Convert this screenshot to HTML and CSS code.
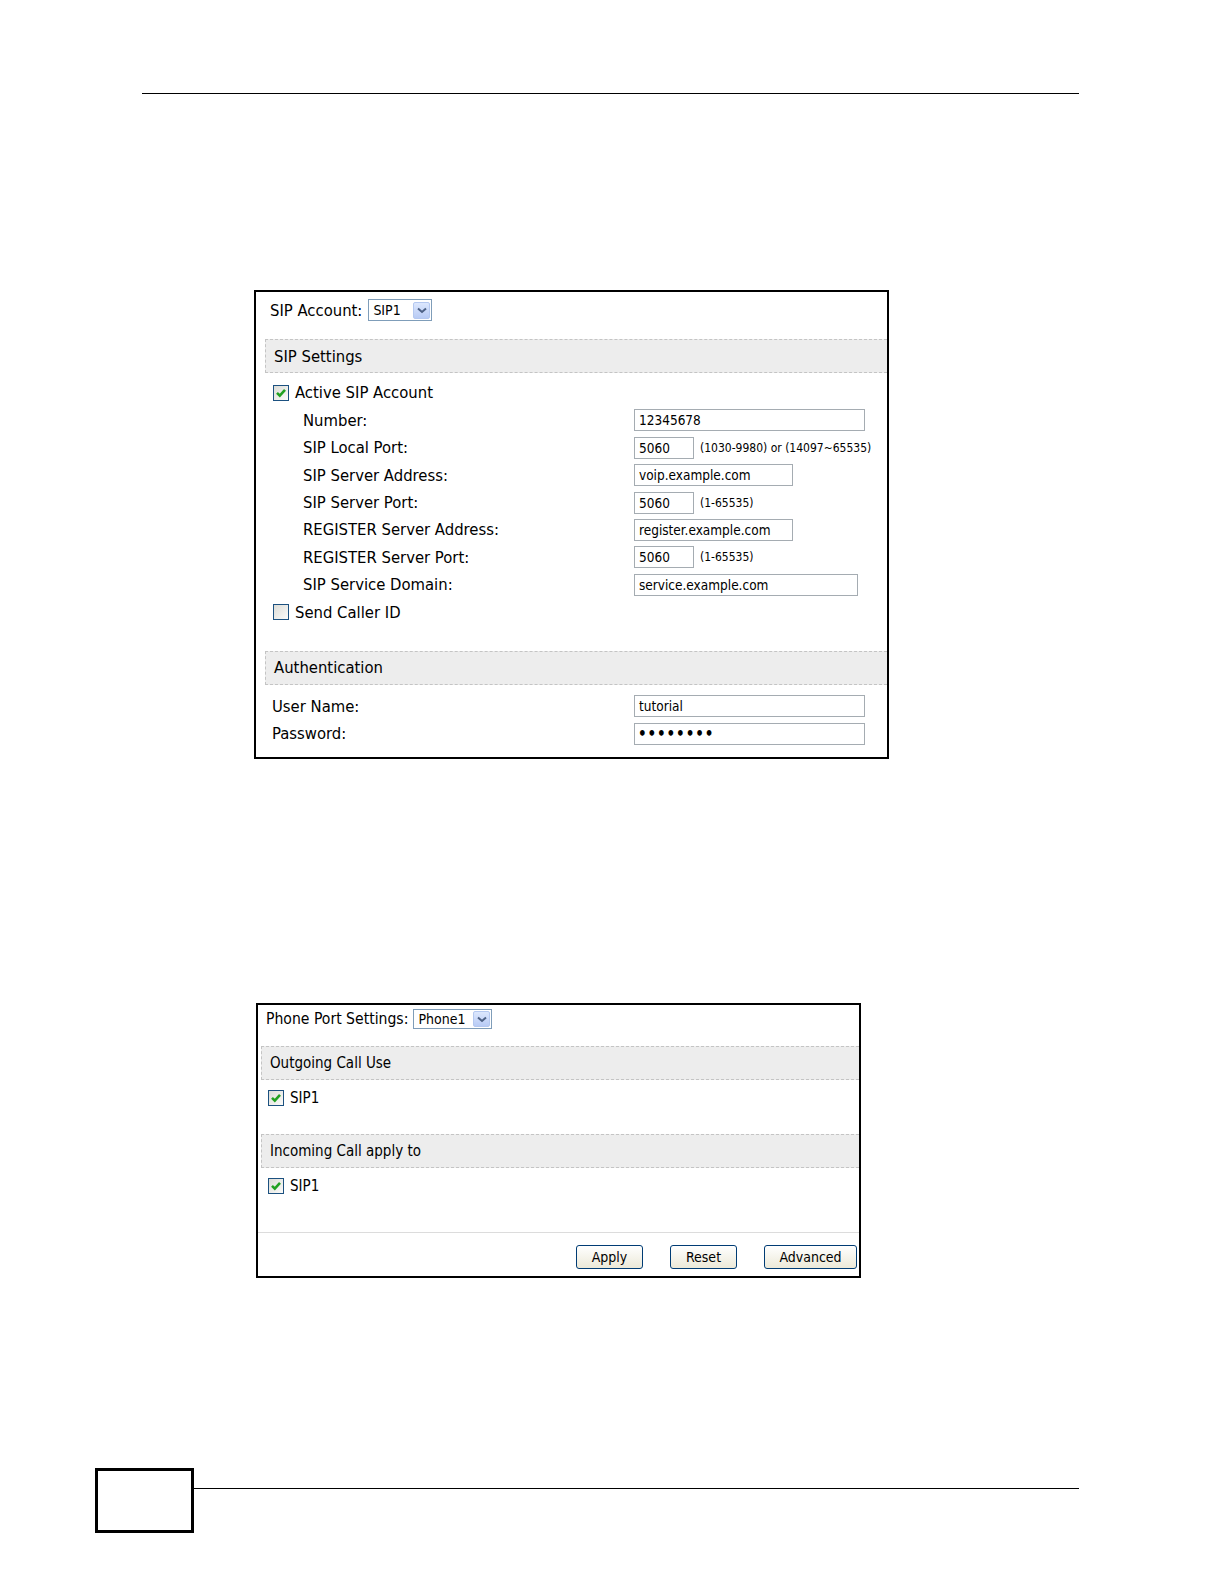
FILE: index.html
```html
<!DOCTYPE html>
<html lang="en">
<head>
<meta charset="UTF-8">
<meta name="viewport" content="width=device-width, initial-scale=1.0">
<title>SIP Account Settings</title>
<link rel="stylesheet" href="styles.css">
</head>

<body>
<div class="top-rule"></div>

<div class="frame sip-frame">
    <div class="pick-row">
        <span>SIP Account:</span>
        <span class="select select-sip">
            <span class="select-text">SIP1</span>
            <span class="select-btn"><svg width="10" height="7" viewBox="0 0 10 7"><path d="M1 1.5 L5 5 L9 1.5" fill="none" stroke="#4d6185" stroke-width="2"/></svg></span>
        </span>
    </div>

    <div class="section-head">SIP Settings</div>
    <div class="rows">
        <div class="row check-row">
            <span class="check-label"><span class="box checked"><svg width="12" height="12" viewBox="0 0 12 12"><path d="M2 5.8 L4.8 8.6 L10 2.8" fill="none" stroke="#21a121" stroke-width="2.6"/></svg></span>Active SIP Account</span>
        </div>
        <div class="row">
            <span class="label indent">Number:</span>
            <span class="field w-long">12345678</span>
        </div>
        <div class="row">
            <span class="label indent">SIP Local Port:</span>
            <span class="field w-port">5060</span><span class="hint">(1030-9980) or (14097~65535)</span>
        </div>
        <div class="row">
            <span class="label indent">SIP Server Address:</span>
            <span class="field w-mid">voip.example.com</span>
        </div>
        <div class="row">
            <span class="label indent">SIP Server Port:</span>
            <span class="field w-port">5060</span><span class="hint">(1-65535)</span>
        </div>
        <div class="row">
            <span class="label indent">REGISTER Server Address:</span>
            <span class="field w-mid">register.example.com</span>
        </div>
        <div class="row">
            <span class="label indent">REGISTER Server Port:</span>
            <span class="field w-port">5060</span><span class="hint">(1-65535)</span>
        </div>
        <div class="row">
            <span class="label indent">SIP Service Domain:</span>
            <span class="field w-wide">service.example.com</span>
        </div>
        <div class="row check-row">
            <span class="check-label"><span class="box"></span>Send Caller ID</span>
        </div>
    </div>

    <div class="section-head auth-head">Authentication</div>
    <div class="rows auth-rows">
        <div class="row">
            <span class="label">User Name:</span>
            <span class="field w-long">tutorial</span>
        </div>
        <div class="row">
            <span class="label">Password:</span>
            <span class="field w-long dots">&bull;&bull;&bull;&bull;&bull;&bull;&bull;&bull;</span>
        </div>
    </div>
</div>

<div class="frame port-frame">
    <div class="pick-row">
        <span>Phone Port Settings:</span>
        <span class="select select-phone">
            <span class="select-text">Phone1</span>
            <span class="select-btn"><svg width="10" height="7" viewBox="0 0 10 7"><path d="M1 1.5 L5 5 L9 1.5" fill="none" stroke="#4d6185" stroke-width="2"/></svg></span>
        </span>
    </div>

    <div class="section-head">Outgoing Call Use</div>
    <div class="line-row">
        <span class="check-label"><span class="box checked"><svg width="12" height="12" viewBox="0 0 12 12"><path d="M2 5.8 L4.8 8.6 L10 2.8" fill="none" stroke="#21a121" stroke-width="2.6"/></svg></span>SIP1</span>
    </div>

    <div class="section-head incoming-head">Incoming Call apply to</div>
    <div class="line-row">
        <span class="check-label"><span class="box checked"><svg width="12" height="12" viewBox="0 0 12 12"><path d="M2 5.8 L4.8 8.6 L10 2.8" fill="none" stroke="#21a121" stroke-width="2.6"/></svg></span>SIP1</span>
    </div>

    <div class="button-bar">
        <button class="btn btn-small">Apply</button>
        <button class="btn btn-small">Reset</button>
        <button class="btn btn-wide">Advanced</button>
    </div>
</div>

<div class="footer">
    <div class="page-box"></div>
    <div class="footer-rule"></div>
</div>
</body>
</html>
```

FILE: styles.css
```css
body {
    margin: 0;
    padding: 0;
    font-family: "DejaVu Sans Condensed", "DejaVu Sans", sans-serif;
    color: #000;
    background: #fff;
}
.top-rule {
    margin: 93px 146px 0 142px;
    border-top: 1px solid #000;
}
.frame {
    border: 2px solid #000;
    background: #fff;
}
.sip-frame {
    width: 631px;
    margin: 196px 0 0 254px;
    padding-bottom: 10px;
    font-size: 16.5px;
}
.port-frame {
    width: 601px;
    margin: 244px 0 0 256px;
    font-size: 15px;
}
.pick-row {
    display: flex;
    align-items: center;
    gap: 6px;
    height: 22px;
    padding: 7px 0 0 14px;
}
.port-frame .pick-row {
    height: 20px;
    gap: 5px;
    padding: 4px 0 0 8px;
    font-size: 15.6px;
}
.select {
    display: flex;
    align-items: center;
    justify-content: space-between;
    box-sizing: border-box;
    height: 22px;
    border: 1px solid #7f9db9;
    padding: 0 1px 0 4px;
    background: #fff;
}
.select-sip {
    width: 64px;
}
.select-phone {
    width: 79px;
    height: 20px;
}
.select-text {
    font-size: 14px;
}
.select-btn {
    display: flex;
    align-items: center;
    justify-content: center;
    width: 17px;
    height: 17px;
    box-sizing: border-box;
    border: 1px solid #b4c8f0;
    border-radius: 2px;
    background: linear-gradient(#dce7fd, #b8cbf5);
}
.select-phone .select-btn {
    height: 16px;
}
.section-head {
    box-sizing: border-box;
    height: 34px;
    margin: 18px 0 0 9px;
    padding-left: 8px;
    display: flex;
    align-items: center;
    background: #ededed;
    border: 1px dashed #c4c4c4;
    border-right: none;
}
.auth-head {
    margin-top: 25px;
}
.port-frame .section-head {
    margin: 17px 0 0 3px;
    padding-left: 8px;
}
.port-frame .incoming-head {
    margin-top: 22.5px;
}
.rows {
    margin-top: 6.3px;
}
.auth-rows {
    margin-top: 7.8px;
}
.row {
    display: flex;
    align-items: center;
    height: 27.4px;
}
.label {
    width: 362px;
    padding-left: 16px;
    flex: none;
}
.label.indent {
    width: 331px;
    padding-left: 47px;
}
.check-row {
    padding-left: 17px;
}
.check-label {
    display: flex;
    align-items: center;
    gap: 6px;
}
.box {
    display: flex;
    align-items: center;
    justify-content: center;
    width: 16px;
    height: 16px;
    box-sizing: border-box;
    border: 1px solid #1c5180;
    background: linear-gradient(135deg, #dcdcd7, #fbfbf9);
}
.field {
    box-sizing: border-box;
    height: 22px;
    border: 1px solid #a5acb2;
    padding: 0 4px;
    font-size: 13.5px;
    line-height: 20px;
    white-space: nowrap;
    overflow: hidden;
}
.w-long {
    width: 231px;
}
.w-port {
    width: 60px;
}
.w-mid {
    width: 159px;
}
.w-wide {
    width: 224px;
}
.dots {
    padding-left: 3px;
    font-size: 15px;
    font-weight: bold;
    letter-spacing: 0.9px;
}
.hint {
    margin-left: 6px;
    font-size: 12px;
}
.line-row {
    display: flex;
    align-items: center;
    height: 27px;
    margin-top: 4.5px;
    padding-left: 10px;
}
.button-bar {
    display: flex;
    justify-content: flex-end;
    gap: 27px;
    margin-top: 32.5px;
    border-top: 1px solid #dcdcdc;
    padding: 12px 2px 7px 0;
}
.btn {
    height: 24px;
    border: 1px solid #003c74;
    border-radius: 3px;
    background: linear-gradient(#ffffff, #ece9d8);
    font-family: "DejaVu Sans Condensed", "DejaVu Sans", sans-serif;
    font-size: 14px;
    color: #000;
    padding: 0;
}
.btn-small {
    width: 67px;
}
.btn-wide {
    width: 93px;
}
.footer {
    display: flex;
    margin: 190px 146px 0 95px;
}
.page-box {
    width: 99px;
    height: 65px;
    box-sizing: border-box;
    border: 3px solid #000;
    flex: none;
}
.footer-rule {
    flex: 1;
    margin-top: 20px;
    border-top: 1px solid #000;
    height: 0;
}
```
